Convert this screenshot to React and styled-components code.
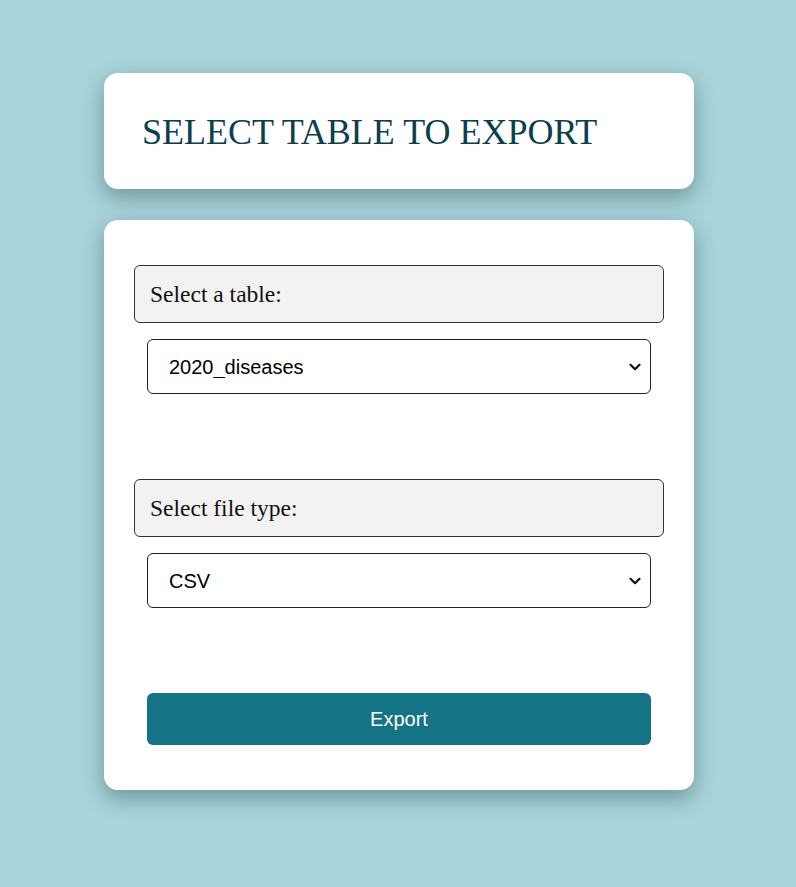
import React from "react";
import styled, { createGlobalStyle } from "styled-components";

const Global = createGlobalStyle`
  html, body { margin: 0; padding: 0; }
  body {
    background: #a9d4db;
    font-family: "Liberation Serif", "Times New Roman", serif;
    min-height: 887px;
  }
`;

const Page = styled.div`
  width: 590px;
  margin-left: 104px;
  padding-top: 73px;
  display: flex;
  flex-direction: column;
  gap: 31px;
`;

const Card = styled.div`
  background: #ffffff;
  border-radius: 14px;
  box-shadow: 0 8px 22px rgba(40, 70, 78, 0.45);
`;

const HeaderCard = styled(Card)`
  height: 116px;
  display: flex;
  align-items: center;
  padding: 0 38px;
  box-sizing: border-box;
`;

const Title = styled.h1`
  margin: 0;
  font-family: "Liberation Serif", "Times New Roman", serif;
  font-weight: 400;
  font-size: 36px;
  color: #0c3e4c;
  line-height: 42px;
  padding-top: 1px;
`;

const FormCard = styled(Card)`
  padding: 45px 30px;
  display: flex;
  flex-direction: column;
`;

const Field = styled.div`
  display: flex;
  flex-direction: column;
  gap: 16px;
  margin-bottom: 85px;
`;

const LabelBox = styled.label`
  display: block;
  height: 58px;
  box-sizing: border-box;
  border: 1px solid #333;
  border-radius: 6px;
  background: #f2f2f2;
  padding: 0 15px;
  font-family: "Liberation Serif", "Times New Roman", serif;
  font-size: 23.5px;
  line-height: 56px;
  color: #111;
`;

const SelectWrap = styled.div`
  position: relative;
  margin: 0 13px;
  display: flex;
`;

const Select = styled.select`
  flex: 1;
  appearance: none;
  -webkit-appearance: none;
  height: 55px;
  box-sizing: border-box;
  border: 1px solid #222;
  border-radius: 6px;
  background: #fff;
  padding: 0 40px 0 21px;
  font-family: "Liberation Sans", Arial, sans-serif;
  font-size: 20px;
  color: #000;
`;

const Chevron = styled.svg`
  position: absolute;
  right: 10px;
  top: 50%;
  margin-top: -4px;
  width: 12px;
  height: 8px;
  pointer-events: none;
`;

const Button = styled.button`
  margin: 0 13px;
  height: 52px;
  border: none;
  border-radius: 6px;
  background: #157386;
  color: #ffffff;
  font-family: "Liberation Sans", Arial, sans-serif;
  font-size: 20px;
  cursor: pointer;
`;

function Dropdown({ id, value, options }) {
  return (
    <SelectWrap>
      <Select id={id} defaultValue={value}>
        {options.map((o) => (
          <option key={o} value={o}>
            {o}
          </option>
        ))}
      </Select>
      <Chevron viewBox="0 0 12 8" aria-hidden="true">
        <path d="M1.5 1.8 L6 6.2 L10.5 1.8" fill="none" stroke="#111" strokeWidth="2.2" strokeLinecap="round" strokeLinejoin="round" />
      </Chevron>
    </SelectWrap>
  );
}

export default function App() {
  return (
    <>
      <Global />
      <Page>
        <HeaderCard>
          <Title>SELECT TABLE TO EXPORT</Title>
        </HeaderCard>
        <FormCard>
          <Field>
            <LabelBox htmlFor="table">Select a table:</LabelBox>
            <Dropdown id="table" value="2020_diseases" options={["2020_diseases", "2021_diseases"]} />
          </Field>
          <Field>
            <LabelBox htmlFor="type">Select file type:</LabelBox>
            <Dropdown id="type" value="CSV" options={["CSV", "JSON", "XLSX"]} />
          </Field>
          <Button type="button">Export</Button>
        </FormCard>
      </Page>
    </>
  );
}
